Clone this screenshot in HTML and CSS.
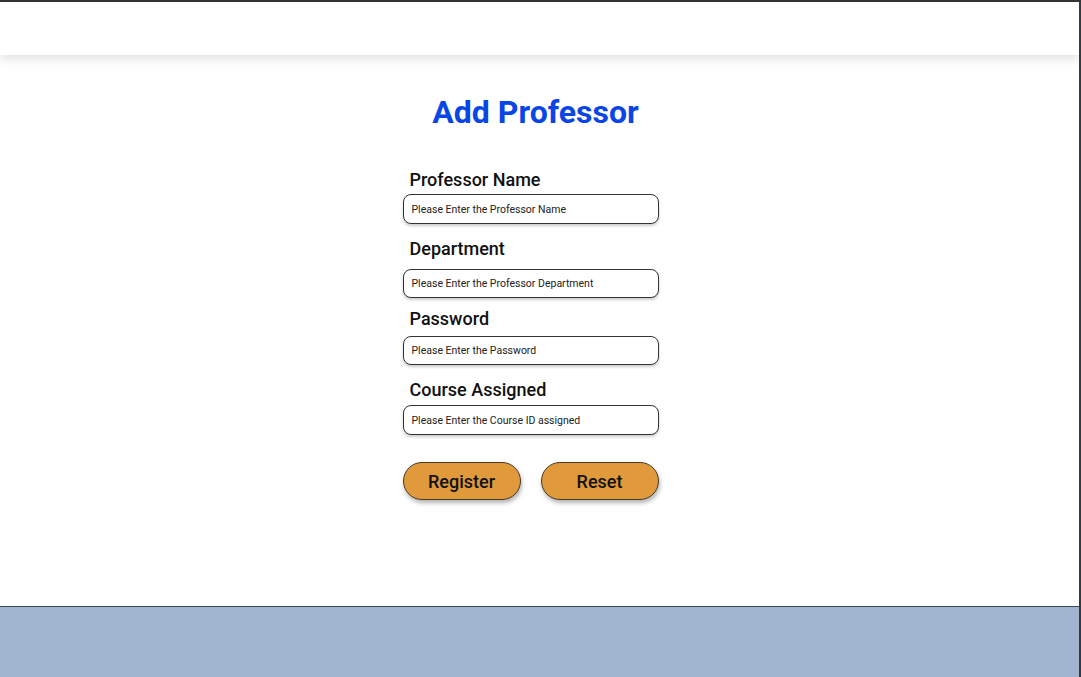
FILE: index.html
```html
<!DOCTYPE html>
<html lang="en">
<head>
<meta charset="utf-8">
<title>Add Professor</title>
<link rel="stylesheet" href="styles.css">
</head>
<body>
<div class="frame">
  <header class="topbar"></header>
  <main class="content">
    <h1 class="title">Add Professor</h1>
    <form class="form">
      <label class="label label-1" for="pname">Professor Name</label>
      <input class="field field-1" id="pname" type="text" placeholder="Please Enter the Professor Name">
      <label class="label label-2" for="dept">Department</label>
      <input class="field field-2" id="dept" type="text" placeholder="Please Enter the Professor Department">
      <label class="label label-3" for="pwd">Password</label>
      <input class="field field-3" id="pwd" type="text" placeholder="Please Enter the Password">
      <label class="label label-4" for="course">Course Assigned</label>
      <input class="field field-4" id="course" type="text" placeholder="Please Enter the Course ID assigned">
      <div class="actions">
        <button class="btn" type="button">Register</button>
        <button class="btn" type="button">Reset</button>
      </div>
    </form>
  </main>
  <footer class="footer"></footer>
</div>
</body>
</html>
```

FILE: styles.css
```css
* { box-sizing: border-box; }
html, body { margin: 0; padding: 0; background: #ffffff; }
body { font-family: Roboto, "Liberation Sans", sans-serif; }

.frame {
  width: 1081px;
  height: 677px;
  display: flex;
  flex-direction: column;
  border-top: 2px solid #333333;
  border-right: 2px solid #333b40;
  overflow: hidden;
}

.topbar {
  height: 53px;
  flex: none;
  background: #ffffff;
  box-shadow: 0 4px 10px rgba(0, 0, 0, 0.12);
  position: relative;
  z-index: 1;
}

.content {
  flex: 1;
  display: flex;
  flex-direction: column;
  align-items: center;
  padding-right: 10px;
}

.title {
  margin: 38px 0 0 0;
  font-size: 32px;
  line-height: 38px;
  font-weight: 700;
  color: #0a45e6;
  position: relative;
  left: 1px;
}

.form {
  width: 264px;
  display: flex;
  flex-direction: column;
  margin-top: 38px;
}

.label {
  font-size: 18px;
  line-height: 21px;
  font-weight: 500;
  color: #111111;
  padding-left: 7px;
}
.label-2 { margin-top: 14px; }
.label-3 { margin-top: 10px; }
.label-4 { margin-top: 14px; }

.field {
  width: 256px;
  height: 30px;
  border: 1px solid #333333;
  border-radius: 8px;
  padding: 0 8px;
  font-family: Roboto, "Liberation Sans", sans-serif;
  font-size: 10.5px;
  color: #222222;
  background: #ffffff;
  box-shadow: 0 2px 3px rgba(0, 0, 0, 0.2);
  outline: none;
}
.field::placeholder { color: #222222; opacity: 1; }
.field-1 { margin-top: 4px; }
.field-2 { margin-top: 10px; height: 29px; }
.field-3 { margin-top: 7px; height: 29px; }
.field-4 { margin-top: 5px; }

.actions {
  width: 256px;
  display: flex;
  justify-content: space-between;
  margin-top: 27px;
}

.btn {
  width: 118px;
  height: 38px;
  border: 1px solid #4a3a28;
  border-radius: 19px;
  background: #e09a3c;
  font-family: Roboto, "Liberation Sans", sans-serif;
  font-size: 18px;
  font-weight: 500;
  color: #111111;
  box-shadow: 1px 3px 4px rgba(0, 0, 0, 0.3);
  cursor: pointer;
}

.footer {
  height: 71px;
  flex: none;
  background: #a0b5cd;
  border-top: 1px solid #3a474e;
}
```
